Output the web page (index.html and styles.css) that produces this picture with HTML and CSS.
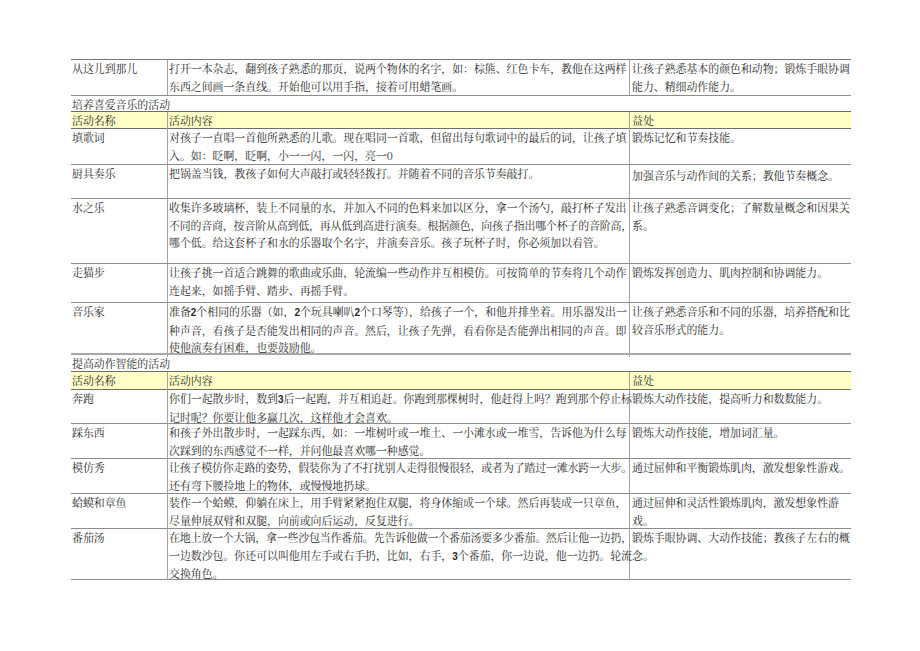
FILE: index.html
```html
<!DOCTYPE html>
<html lang="zh-CN">
<head>
<meta charset="utf-8">
<title>活动</title>
<link rel="stylesheet" href="styles.css">
</head>
<body>
<div class="doc">
  <div class="row h36">
    <div class="c1">从这儿到那儿</div>
    <div class="c2">打开一本杂志，翻到孩子熟悉的那页，说两个物体的名字，如：棕熊、红色卡车，教他在这两样<br>东西之间画一条直线。开始他可以用手指，接着可用蜡笔画。</div>
    <div class="c3">让孩子熟悉基本的颜色和动物；锻炼手眼协调<br>能力、精细动作能力。</div>
  </div>
  <div class="title h16">培养喜爱音乐的活动</div>
  <div class="row head h17">
    <div class="c1">活动名称</div>
    <div class="c2">活动内容</div>
    <div class="c3">益处</div>
  </div>
  <div class="row h36">
    <div class="c1">填歌词</div>
    <div class="c2">对孩子一直唱一首他所熟悉的儿歌。现在唱同一首歌，但留出每句歌词中的最后的词，让孩子填<br>入。如：眨啊，眨啊，小一一闪，一闪，亮一0</div>
    <div class="c3">锻炼记忆和节奏技能。</div>
  </div>
  <div class="row h34">
    <div class="c1">厨具奏乐</div>
    <div class="c2">把锅盖当钱，教孩子如何大声敲打或轻轻拨打。并随着不同的音乐节奏敲打。</div>
    <div class="c3 low">加强音乐与动作间的关系；教他节奏概念。</div>
  </div>
  <div class="row h65">
    <div class="c1">水之乐</div>
    <div class="c2">收集许多玻璃杯，装上不同量的水，并加入不同的色料来加以区分，拿一个汤勺，敲打杯子发出<br><span class="tight">不同的音商，按音阶从高到低，再从低到高进行演奏。根据颜色，向孩子指出哪个杯子的音阶高，</span><br>哪个低。给这套杯子和水的乐器取个名字，并演奏音乐。孩子玩杯子时，你必须加以看管。</div>
    <div class="c3">让孩子熟悉音调变化；了解数量概念和因果关<br>系。</div>
  </div>
  <div class="row h39">
    <div class="c1">走猫步</div>
    <div class="c2">让孩子挑一首适合跳舞的歌曲或乐曲，轮流编一些动作并互相模仿。可按简单的节奏将几个动作<br>连起来，如摇手臂、踏步、再摇手臂。</div>
    <div class="c3">锻炼发挥创造力、肌肉控制和协调能力。</div>
  </div>
  <div class="row h52 thick">
    <div class="c1">音乐家</div>
    <div class="c2">准备<b class="n">2</b>个相同的乐器（如，<b class="n">2</b>个玩具喇叭<b class="n">2</b>个口琴等），给孩子一个，和他并排坐着。用乐器发出一<br>种声音，看孩子是否能发出相同的声音。然后，让孩子先弹，看看你是否能弹出相同的声音。即<br>使他演奏有困难，也要鼓励他。</div>
    <div class="c3">让孩子熟悉音乐和不同的乐器，培养搭配和比<br>较音乐形式的能力。</div>
  </div>
  <div class="title h17">提高动作智能的活动</div>
  <div class="row head h18">
    <div class="c1">活动名称</div>
    <div class="c2">活动内容</div>
    <div class="c3">益处</div>
  </div>
  <div class="row h34">
    <div class="c1">奔跑</div>
    <div class="c2">你们一起散步时，数到<b class="n">3</b>后一起跑，并互相追赶。你跑到那棵树时，他赶得上吗？跑到那个停止标<br>记时呢？你要让他多赢几次，这样他才会喜欢。</div>
    <div class="c3">锻炼大动作技能，提高听力和数数能力。</div>
  </div>
  <div class="row h35">
    <div class="c1">踩东西</div>
    <div class="c2">和孩子外出散步时，一起踩东西，如：一堆树叶或一堆土、一小滩水或一堆雪，告诉他为什么每<br>次踩到的东西感觉不一样，并问他最喜欢哪一种感觉。</div>
    <div class="c3">锻炼大动作技能，增加词汇量。</div>
  </div>
  <div class="row h35">
    <div class="c1">模仿秀</div>
    <div class="c2"><span class="tight">让孩子模仿你走路的姿势，假装你为了不打扰别人走得很慢很轻，或者为了踏过一滩水跨一大步。</span><br>还有弯下腰捡地上的物体，或慢慢地扔球。</div>
    <div class="c3">通过屈伸和平衡锻炼肌肉，激发想象性游戏。</div>
  </div>
  <div class="row h35">
    <div class="c1">蛤蟆和章鱼</div>
    <div class="c2">装作一个蛤蟆，仰躺在床上，用手臂紧紧抱住双腿，将身体缩成一个球。然后再装成一只章鱼，<br>尽量伸展双臂和双腿，向前或向后运动，反复进行。</div>
    <div class="c3">通过屈伸和灵活性锻炼肌肉，激发想象性游<br>戏。</div>
  </div>
  <div class="row h51">
    <div class="c1">番茄汤</div>
    <div class="c2"><span class="tight">在地上放一个大锅，拿一些沙包当作番茄。先告诉他做一个番茄汤要多少番茄。然后让他一边扔，</span><br>一边数沙包。你还可以叫他用左手或右手扔，比如，右手，<b class="n">3</b>个番茄，你一边说，他一边扔。轮流<br>交换角色。</div>
    <div class="c3">锻炼手眼协调、大动作技能；教孩子左右的概<br>念。</div>
  </div>
</div>
</body>
</html>
```

FILE: styles.css
```css
html, body {
  margin: 0;
  padding: 0;
  background: #ffffff;
}

body {
  font-family: "Noto Serif CJK SC", "Noto Sans CJK SC", sans-serif;
  font-size: 10.9px;
  line-height: 17.5px;
  color: #2a2a2a;
}

.doc {
  margin: 59px 0 0 71px;
  width: 780px;
  border-top: 1px solid #7a7a7a;
}

.row {
  display: grid;
  grid-template-columns: 97px 462px 221px;
  box-sizing: border-box;
  border-bottom: 1px solid #8c8c8c;
}

.row > div {
  white-space: nowrap;
  overflow: visible;
}

.c1 {
  padding-left: 1px;
  border-right: 1px solid #a3a3a3;
}

.c2 {
  padding-left: 1px;
  border-right: 1px solid #a3a3a3;
}

.c3 {
  padding-left: 2px;
}

.low {
  padding-top: 2px;
}

.tight {
  letter-spacing: -0.12px;
}

.head {
  background: #ffffc6;
  border-bottom-color: #6e6e6e;
}

.title {
  box-sizing: border-box;
  padding-left: 1px;
  line-height: 16px;
  border-bottom: 1px solid #6e6e6e;
}

.thick {
  border-bottom: 2px solid #a8a8a8;
}

.n {
  font-family: "Liberation Sans", sans-serif;
  font-weight: bold;
  font-size: 10px;
}

.h16 { height: 16px; }
.h17 { height: 17px; }
.h18 { height: 18px; }
.h34 { height: 34px; }
.h35 { height: 35px; }
.h36 { height: 36px; }
.h39 { height: 39px; }
.h51 { height: 51px; }
.h52 { height: 52px; }
.h65 { height: 65px; }
```
